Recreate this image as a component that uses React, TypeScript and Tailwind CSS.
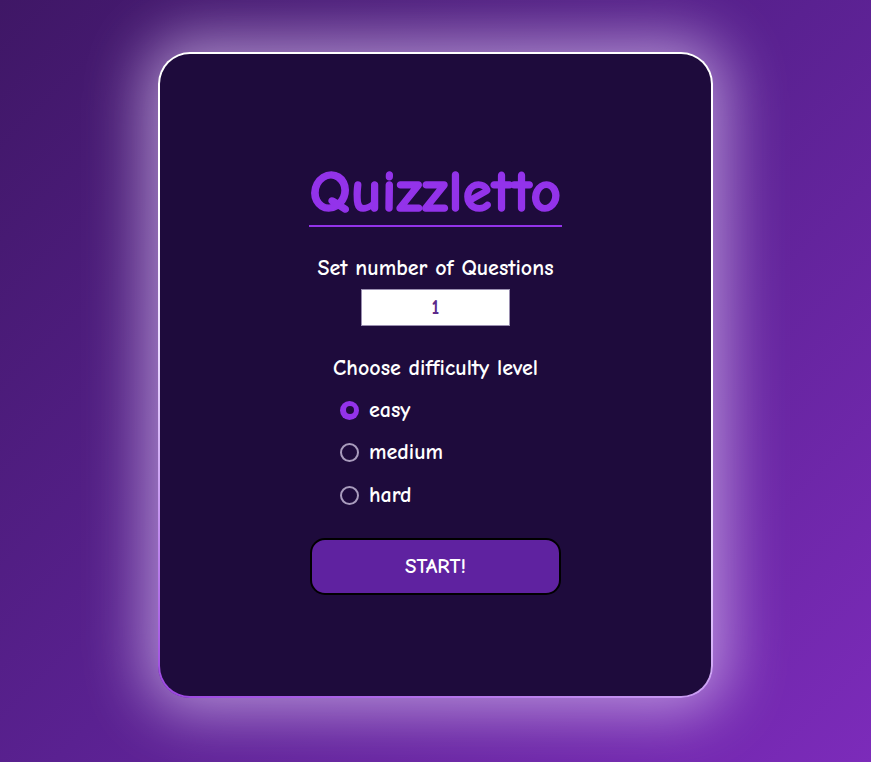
import React, { useState } from "react";

const font = { fontFamily: '"Comic Sans MS", "Comic Neue", "DejaVu Sans", sans-serif' };

export default function App() {
  const [level, setLevel] = useState("easy");
  const [count, setCount] = useState("1");
  const levels = ["easy", "medium", "hard"];
  return (
    <div
      className="w-full h-[762px] overflow-hidden flex justify-center pt-[52px] bg-[linear-gradient(135deg,#3f1766_0%,#5a2191_50%,#7c2bba_100%)]"
      style={font}
    >
      <div className="w-[555px] h-[646px] rounded-[32px] p-[2px] bg-[linear-gradient(20deg,#9b45e0_0%,#e9d8ff_40%,#ffffff_60%)] shadow-[0_0_60px_14px_rgba(235,215,255,0.6)]">
        <div className="w-full h-full rounded-[30px] bg-[#1e0b3c] flex flex-col items-center pt-[105px]">
          <h1 className="text-[59px] leading-[66px] font-bold text-[#9333ea] border-b-2 border-[#9333ea] [-webkit-text-stroke:1.6px_#9333ea] tracking-[0.5px]">
            Quizzletto
          </h1>
          <p className="mt-[26px] text-[22px] leading-[30px] font-bold text-white">Set number of Questions</p>
          <input
            value={count}
            onChange={(e) => setCount(e.target.value)}
            className="mt-[6px] w-[149px] h-[37px] bg-white border border-[#9a8fb0] text-center text-[20px] font-bold text-[#5b2a8a] outline-none"
            style={font}
          />
          <p className="mt-[27px] text-[22px] leading-[30px] font-bold text-white">Choose difficulty level</p>
          <div className="mt-[12px] flex flex-col gap-[12.5px] w-[191px]">
            {levels.map((l) => (
              <label key={l} className="flex items-center gap-[10px] cursor-pointer h-[30px]" onClick={() => setLevel(l)}>
                {level === l ? (
                  <span className="w-[19px] h-[19px] rounded-full bg-[#9333ea] flex items-center justify-center">
                    <span className="w-[8px] h-[8px] rounded-full bg-[#1e0b3c]" />
                  </span>
                ) : (
                  <span className="w-[19px] h-[19px] rounded-full border-2 border-[#a99cbd]" />
                )}
                <span className="text-[22px] font-bold text-white">{l}</span>
              </label>
            ))}
          </div>
          <button
            className="mt-[28px] w-[251px] h-[57px] rounded-[15px] bg-[#5f22a0] border-2 border-black text-white text-[21px] font-bold"
            style={font}
          >
            START!
          </button>
        </div>
      </div>
    </div>
  );
}
